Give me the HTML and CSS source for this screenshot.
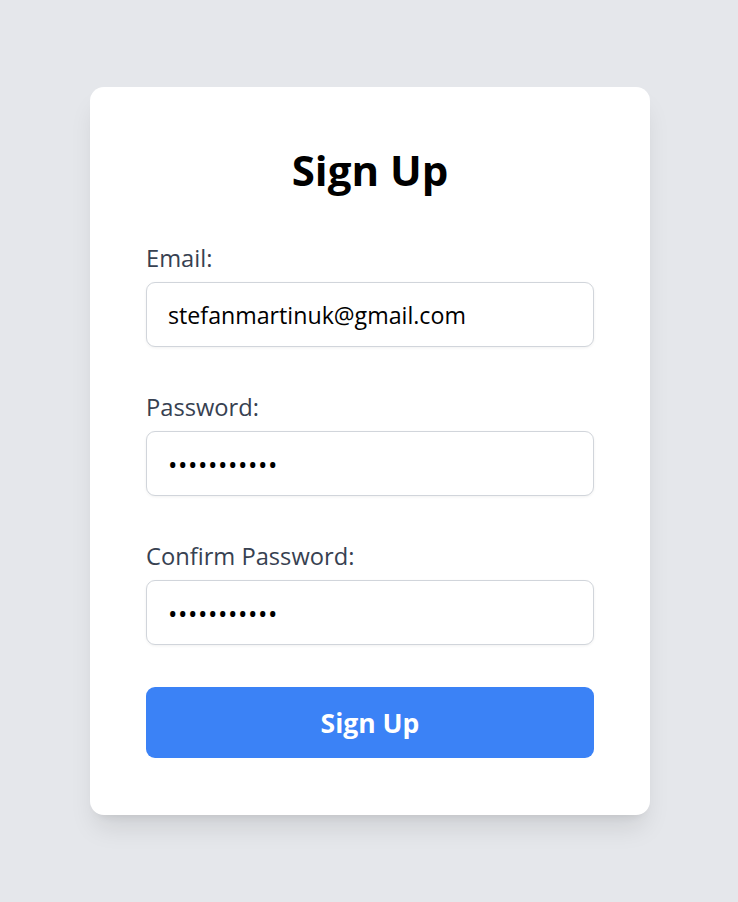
FILE: index.html
```html
<!DOCTYPE html>
<html lang="en">
<head>
<meta charset="utf-8">
<title>Sign Up</title>
<link rel="stylesheet" href="styles.css">
</head>
<body>
<main class="page">
  <form class="card">
    <h1 class="title">Sign Up</h1>
    <div class="field">
      <label class="label" for="email">Email:</label>
      <input class="input" id="email" type="email" value="stefanmartinuk@gmail.com">
    </div>
    <div class="field">
      <label class="label" for="password">Password:</label>
      <input class="input input-secret" id="password" type="password" value="12345678901">
    </div>
    <div class="field">
      <label class="label" for="confirm">Confirm Password:</label>
      <input class="input input-secret" id="confirm" type="password" value="12345678901">
    </div>
    <button class="button" type="button">Sign Up</button>
  </form>
</main>
</body>
</html>
```

FILE: styles.css
```css
* { box-sizing: border-box; }

html, body {
  margin: 0;
  padding: 0;
}

body {
  background: #e5e7eb;
  font-family: "Open Sans", "Noto Sans", sans-serif;
}

.page {
  min-height: 100vh;
  display: flex;
  align-items: center;
  justify-content: center;
  padding-left: 2px;
}

.card {
  width: 560px;
  background: #ffffff;
  border-radius: 14px;
  padding: 58px 56px 57px;
  box-shadow: 0 17px 26px -5px rgba(0, 0, 0, 0.1), 0 7px 10px -7px rgba(0, 0, 0, 0.1);
  display: flex;
  flex-direction: column;
}

.title {
  margin: 0 0 47px;
  font-size: 42px;
  line-height: 50px;
  font-weight: 700;
  color: #000;
  text-align: center;
}

.field {
  display: flex;
  flex-direction: column;
  gap: 8px;
  margin-bottom: 44px;
}

.field:nth-of-type(3) {
  margin-bottom: 42px;
}

.label {
  font-size: 23.7px;
  line-height: 32px;
  color: #374151;
}

.input {
  display: block;
  width: 100%;
  height: 65px;
  padding: 15px 21px;
  font-family: inherit;
  font-size: 23.2px;
  line-height: 33px;
  color: #000;
  background: #fff;
  border: 1px solid #d1d5db;
  border-radius: 9px;
  box-shadow: 0 1px 3px rgba(0, 0, 0, 0.06);
  outline: none;
}

.input-secret {
  font-size: 25px;
  letter-spacing: 0.6px;
}

.button {
  height: 71px;
  border: none;
  border-radius: 9px;
  background: #3b82f6;
  color: #fff;
  font-family: inherit;
  font-size: 26.5px;
  font-weight: 700;
  cursor: pointer;
}
```
